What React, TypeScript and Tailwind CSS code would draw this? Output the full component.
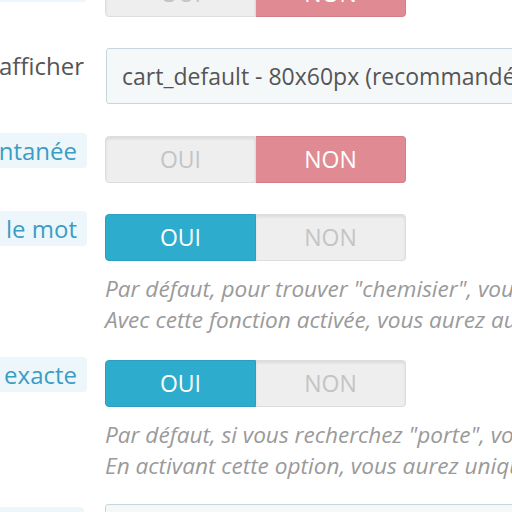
import React from "react";

const font = { fontFamily: '"Open Sans", "Liberation Sans", sans-serif' };

function Toggle({ on }: { on: boolean }) {
  return (
    <div className="flex w-[301px] h-[47px] text-[23px]">
      <div
        className={
          on
            ? "flex-1 flex items-center justify-center rounded-l-[4px] bg-[#2eacce] border border-[#2a9fc0] text-white"
            : "flex-1 flex items-center justify-center rounded-l-[4px] bg-[#eeeeee] border border-[#dddddd] text-[#c4c4c4] shadow-[inset_0_2px_3px_rgba(0,0,0,0.08)]"
        }
      >
        OUI
      </div>
      <div
        className={
          on
            ? "flex-1 flex items-center justify-center rounded-r-[4px] bg-[#eeeeee] border border-l-0 border-[#dddddd] text-[#c4c4c4] shadow-[inset_0_2px_3px_rgba(0,0,0,0.08)]"
            : "flex-1 flex items-center justify-center rounded-r-[4px] bg-[#e08b93] border border-l-0 border-[#d47f87] text-white"
        }
      >
        NON
      </div>
    </div>
  );
}

function BoxLabel({ text }: { text: string }) {
  return (
    <div className="w-[87px] shrink-0 mr-[18px]">
      <div className="h-[35px] mt-[-3px] bg-[#edf7fb] rounded-r-[4px] flex items-center justify-end pr-[10px] overflow-hidden whitespace-nowrap text-[24px] text-[#3b9dc4]">
        {text}
      </div>
    </div>
  );
}

function Help({ lines }: { lines: string[] }) {
  return (
    <div className="mt-[12px] text-[22.6px] leading-[31px] italic text-[#9a9a9a] whitespace-nowrap">
      {lines.map((l) => (
        <div key={l}>{l}</div>
      ))}
    </div>
  );
}

export default function App() {
  return (
    <div className="w-[512px] h-[512px] overflow-hidden bg-white" style={font}>
      <div className="mt-[-30px] flex flex-col">
        <div className="flex">
          <BoxLabel text="Recherche" />
          <Toggle on={false} />
        </div>

        <div className="flex mt-[31px]">
          <div className="w-[84px] shrink-0 mr-[22px] flex justify-end overflow-hidden whitespace-nowrap text-[24px] text-[#555555]">
            Taille de l'image à afficher
          </div>
          <div className="h-[56px] w-[460px] shrink-0 bg-[#f5f8f9] border border-[#c7d6db] rounded-[3px] flex items-center pl-[15px] text-[23px] text-[#555555] whitespace-nowrap">
            cart_default - 80x60px (recommandé)
          </div>
        </div>

        <div className="flex mt-[32px]">
          <BoxLabel text="Recherche instantanée" />
          <Toggle on={false} />
        </div>

        <div className="flex mt-[31px]">
          <BoxLabel text="Rechercher dans le mot" />
          <div className="flex flex-col">
            <Toggle on={true} />
            <Help
              lines={[
                'Par défaut, pour trouver "chemisier", vous devez saisir "chemisier", "chemis", "chem", etc.',
                'Avec cette fonction activée, vous aurez aussi des résultats avec "misier".',
              ]}
            />
          </div>
        </div>

        <div className="flex mt-[25px]">
          <BoxLabel text="Recherche exacte" />
          <div className="flex flex-col">
            <Toggle on={true} />
            <Help
              lines={[
                'Par défaut, si vous recherchez "porte", vous obtiendrez "porte", "portefeuille", etc.',
                'En activant cette option, vous aurez uniquement les résultats avec "porte".',
              ]}
            />
          </div>
        </div>

        <div className="flex mt-[23px]">
          <div className="w-[84px] shrink-0 mr-[21px]">
            <div className="h-[35px] mt-[3px] bg-[#edf7fb] rounded-r-[4px] flex items-start justify-end pt-[10px] pr-[10px] overflow-hidden whitespace-nowrap text-[24px] leading-[32px] text-[#3b9dc4]">
              Poids
            </div>
          </div>
          <div className="h-[56px] w-[460px] shrink-0 bg-[#f5f8f9] border border-[#c7d6db] rounded-[3px]"></div>
        </div>
      </div>
    </div>
  );
}
